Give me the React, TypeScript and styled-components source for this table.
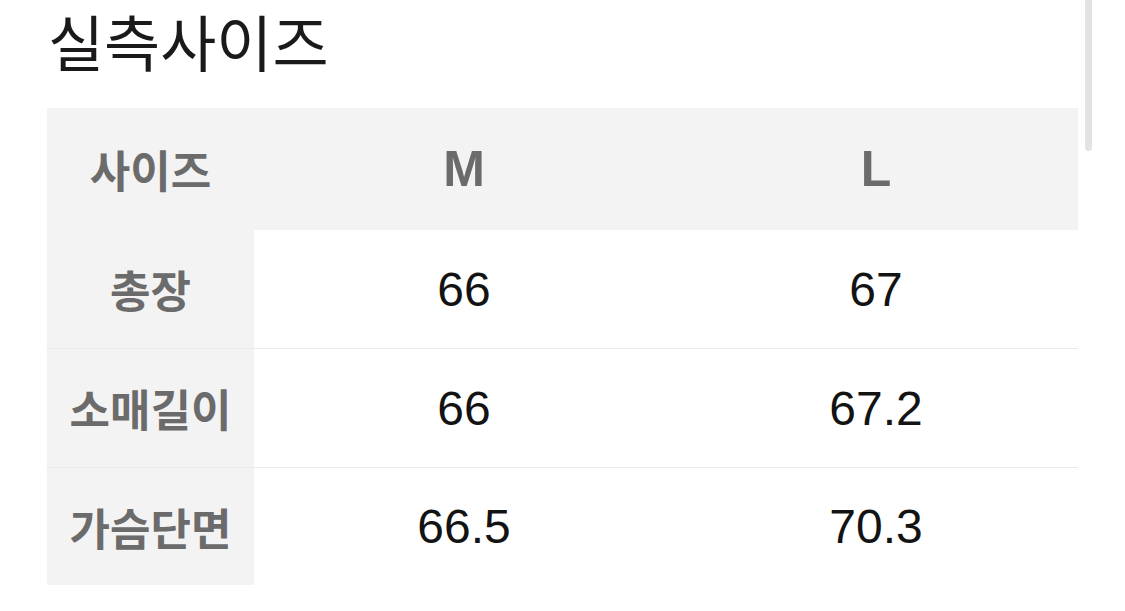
import React from "react";
import styled, { createGlobalStyle } from "styled-components";

const GlobalStyle = createGlobalStyle`
  html, body {
    margin: 0;
    padding: 0;
    background: #ffffff;
  }
  body {
    font-family: "Noto Sans CJK KR", "Noto Sans", sans-serif;
    overflow: hidden;
  }
`;

const Page = styled.div`
  position: relative;
  width: 1125px;
  height: 611px;
  padding-left: 47px;
  box-sizing: border-box;
`;

const Title = styled.h1`
  margin: 0;
  padding: 0 0 0 1px;
  height: 108px;
  box-sizing: border-box;
  font-family: "Noto Sans CJK KR", sans-serif;
  font-size: 61px;
  font-weight: 400;
  line-height: 82px;
  color: #1b1919;
`;

const Table = styled.div`
  display: grid;
  grid-template-columns: 207px 420px 404px;
  grid-template-rows: 122px 118px 119px 118px;
  width: 1031px;
`;

const Cell = styled.div<{ $head?: boolean; $gray?: boolean; $line?: boolean }>`
  display: flex;
  align-items: center;
  justify-content: center;
  background: ${(p) => (p.$gray ? "#f4f3f3" : "#ffffff")};
  border-top: ${(p) => (p.$line ? "1.5px solid #ebeaea" : "none")};
  box-sizing: border-box;
  color: ${(p) => (p.$head ? "#6c6b6b" : "#131313")};
`;

const Label = styled.span`
  font-family: "Noto Sans CJK KR", sans-serif;
  font-size: 44px;
  font-weight: 700;
`;

const SizeName = styled.span`
  font-family: "Liberation Sans", Arial, sans-serif;
  font-size: 50px;
  font-weight: 700;
`;

const Value = styled.span`
  font-family: "Liberation Sans", Arial, sans-serif;
  font-size: 48px;
  font-weight: 400;
`;

const ScrollThumb = styled.div`
  position: absolute;
  top: 0;
  left: 1085px;
  width: 7px;
  height: 151px;
  border-radius: 0 0 4px 4px;
  background: #e3e3e3;
`;

const sizes = ["M", "L"];

const rows: { name: string; values: string[] }[] = [
  { name: "총장", values: ["66", "67"] },
  { name: "소매길이", values: ["66", "67.2"] },
  { name: "가슴단면", values: ["66.5", "70.3"] },
];

const App: React.FC = () => {
  return (
    <Page>
      <GlobalStyle />
      <Title>실측사이즈</Title>
      <Table>
        <Cell $head $gray>
          <Label>사이즈</Label>
        </Cell>
        {sizes.map((s) => (
          <Cell key={s} $head $gray>
            <SizeName>{s}</SizeName>
          </Cell>
        ))}
        {rows.map((row, i) => (
          <React.Fragment key={row.name}>
            <Cell $head $gray $line={i > 0}>
              <Label>{row.name}</Label>
            </Cell>
            {row.values.map((v, j) => (
              <Cell key={j} $line={i > 0}>
                <Value>{v}</Value>
              </Cell>
            ))}
          </React.Fragment>
        ))}
      </Table>
      <ScrollThumb />
    </Page>
  );
};

export default App;
